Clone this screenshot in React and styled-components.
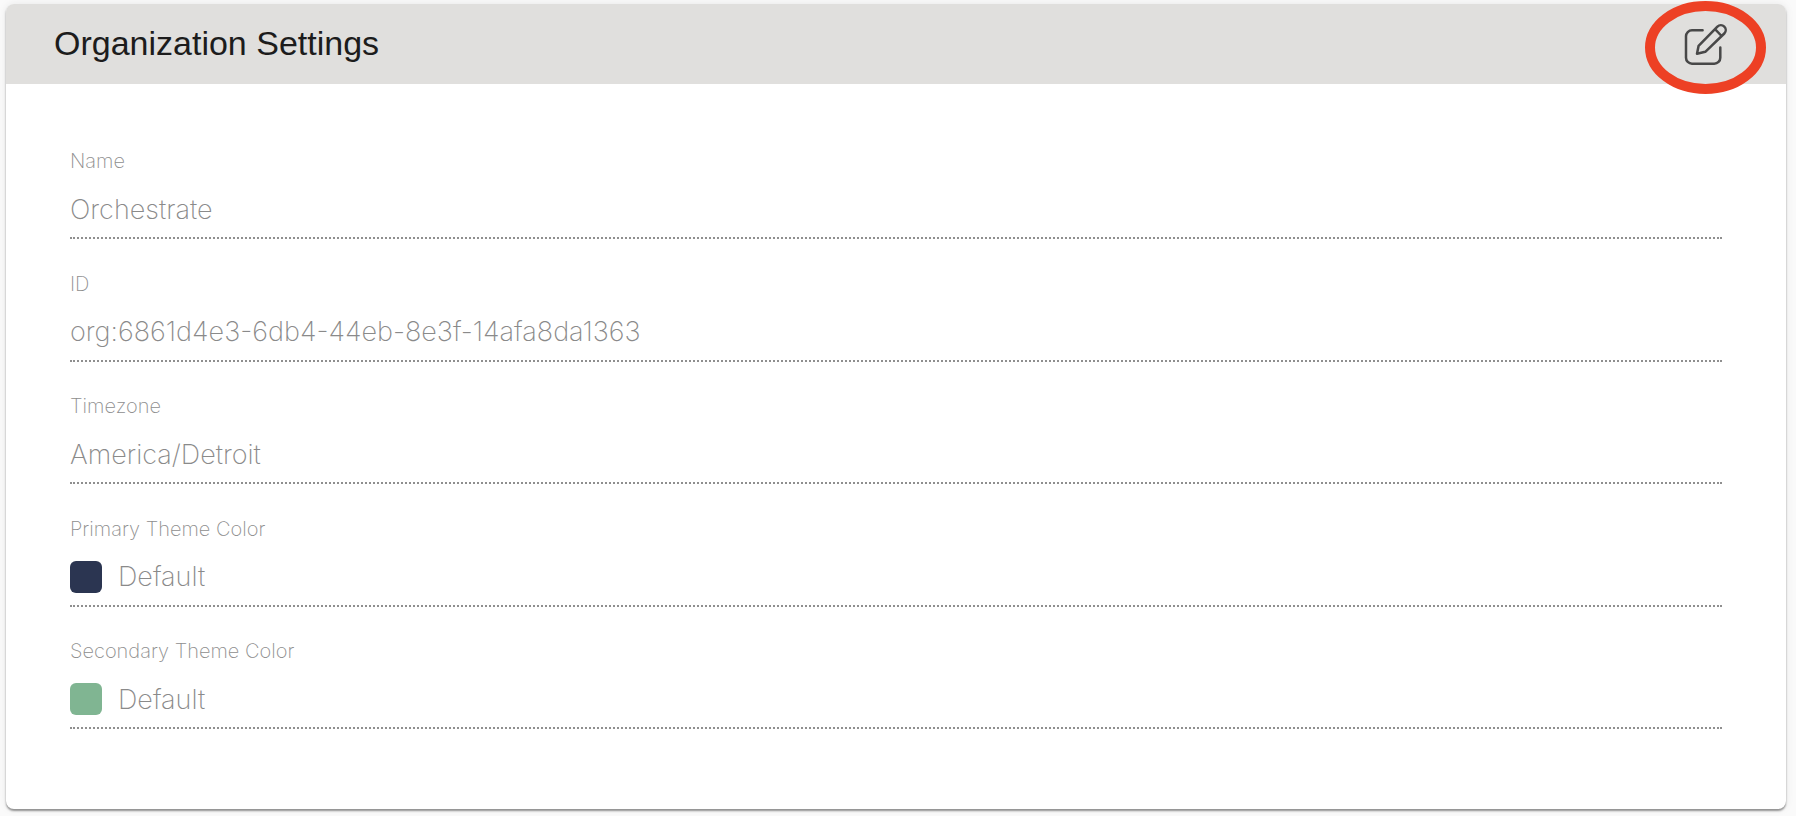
import React, { useId } from "react";
import styled, { createGlobalStyle } from "styled-components";

const GlobalStyle = createGlobalStyle`
  *, *::before, *::after { box-sizing: border-box; }
  body {
    margin: 0;
    background: #fafafa;
    font-family: "Liberation Sans", Arial, sans-serif;
  }
`;

const Page = styled.main`
  display: flex;
  min-height: 100vh;
  padding: 4px 10px 7px 6px;
`;

const Card = styled.section`
  display: flex;
  flex: 1;
  flex-direction: column;
  background: #fff;
  border-radius: 8px;
  box-shadow: 0 2px 2px rgba(0, 0, 0, 0.4), 0 0 8px rgba(0, 0, 0, 0.08);
`;

const Header = styled.header`
  display: flex;
  align-items: center;
  justify-content: space-between;
  height: 80px;
  padding: 0 58px 0 48px;
  background: #e0dfdd;
  border-radius: 8px 8px 0 0;
`;

const Title = styled.h1`
  margin: 0;
  padding-bottom: 2px;
  color: #1c1c1c;
  font-size: 34px;
  font-weight: 400;
  line-height: 40px;
`;

const EditButton = styled.button`
  position: relative;
  display: flex;
  width: 44px;
  height: 44px;
  padding: 0;
  border: 0;
  background: none;
  cursor: pointer;
`;

const Highlight = styled.svg`
  position: absolute;
  top: -21px;
  left: -39px;
  pointer-events: none;
`;

const Fields = styled.form`
  display: flex;
  flex: 1;
  flex-direction: column;
  justify-content: space-between;
  gap: 24px;
  padding: 65px 64px 80px;
`;

const Field = styled.div`
  display: flex;
  flex-direction: column;
  gap: 8px;
  border-bottom: 2px dotted #8f8f8f;
`;

const Label = styled.label`
  color: #8e8e8e;
  font-family: Inter, sans-serif;
  font-size: 20px;
  font-weight: 200;
  line-height: 24px;
`;

const ValueRow = styled.div`
  display: flex;
  align-items: center;
  gap: 16px;
  height: 56px;
`;

const Swatch = styled.span`
  width: 32px;
  height: 32px;
  border-radius: 6px;
  background: ${(p) => p.$color};
`;

const Value = styled.input`
  flex: 1;
  min-width: 0;
  height: 40px;
  padding: 0;
  border: 0;
  background: none;
  color: #8a8a8a;
  font-family: Inter, sans-serif;
  font-size: 27px;
  font-weight: 200;
`;

function SettingField({ label, value, color }) {
  const id = useId();
  return (
    <Field>
      <Label htmlFor={id}>{label}</Label>
      <ValueRow>
        {color && <Swatch $color={color} />}
        <Value id={id} value={value} type="text" disabled readOnly />
      </ValueRow>
    </Field>
  );
}

const settings = [
  { label: "Name", value: "Orchestrate" },
  { label: "ID", value: "org:6861d4e3-6db4-44eb-8e3f-14afa8da1363" },
  { label: "Timezone", value: "America/Detroit" },
  { label: "Primary Theme Color", value: "Default", color: "#2b3551" },
  { label: "Secondary Theme Color", value: "Default", color: "#80b592" },
];

export default function App() {
  return (
    <>
      <GlobalStyle />
      <Page>
        <Card>
          <Header>
            <Title>Organization Settings</Title>
            <EditButton type="button" aria-label="Edit organization settings">
              <svg width="44" height="44" viewBox="0 0 44 44" fill="none" stroke="#484848" strokeWidth="2.5" strokeLinecap="round" strokeLinejoin="round">
                <path d="M18.6 8.3H8a6 6 0 0 0-6 6v21.4a6 6 0 0 0 6 6h22.3a6 6 0 0 0 6-6V25.6" />
                <path d="M13 31.8l1.6-8L33.4 4.6a4.8 4.8 0 0 1 6.9 6.9L21.3 29.8zM31 7.2l6.6 6.8" />
              </svg>
              <Highlight width="121" height="93" viewBox="0 0 121 93" fill="none" stroke="#ed4024" strokeWidth="10">
                <ellipse cx="60.5" cy="46.5" rx="55.5" ry="41.5" />
              </Highlight>
            </EditButton>
          </Header>
          <Fields>
            {settings.map((s) => (
              <SettingField key={s.label} {...s} />
            ))}
          </Fields>
        </Card>
      </Page>
    </>
  );
}
